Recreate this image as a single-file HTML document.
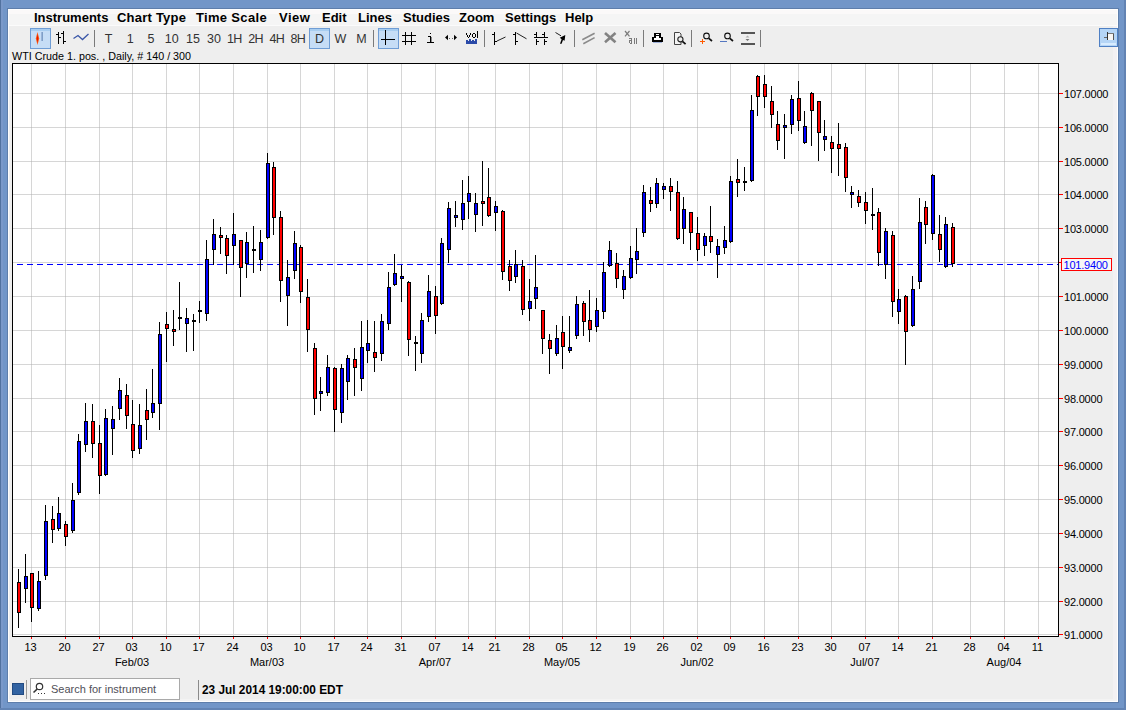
<!DOCTYPE html>
<html><head><meta charset="utf-8"><title>WTI Crude</title>
<style>
html,body{margin:0;padding:0;}
body{width:1126px;height:710px;overflow:hidden;position:relative;background:#7296c8;font-family:"Liberation Sans",sans-serif;}
.a{position:absolute;}
#lf{position:absolute;left:0;top:0;width:1px;height:710px;background:#52729f;}
#lf2{position:absolute;left:1px;top:0;width:2px;height:710px;background:#7b99c9;}
#rf{position:absolute;left:1124px;top:0;width:2px;height:710px;background:#6283b3;}
#bf{position:absolute;left:0;top:708px;width:1126px;height:2px;background:#6384b4;}
#dk{position:absolute;left:7px;top:8px;width:1112px;height:695px;background:#5e7eab;}
#panel{position:absolute;left:8px;top:9px;width:1110px;height:693px;background:#eeeeee;}
#menubar{position:absolute;left:8px;top:9px;width:1110px;height:17px;background:#f5f5f5;}
#mtop{position:absolute;left:8px;top:9px;width:1110px;height:1px;background:#ffffff;}
#mtop2{position:absolute;left:8px;top:10px;width:1110px;height:4px;background:#fbf9f9;}
#mline{position:absolute;left:8px;top:25px;width:1110px;height:1px;background:#fbfbfb;}
#lw{position:absolute;left:8px;top:9px;width:1px;height:693px;background:#fdfdfd;}
#rstrip{position:absolute;left:1113px;top:26px;width:5px;height:676px;background:#f3f1f3;}
#rw{position:absolute;left:1117px;top:9px;width:1px;height:693px;background:#fefefe;}
#bstrip{position:absolute;left:8px;top:699px;width:1110px;height:3px;background:#f3f3f3;}
#bw{position:absolute;left:8px;top:701px;width:1110px;height:1px;background:#fefefe;}
.menu{position:absolute;top:10px;font-weight:bold;font-size:13px;color:#000;line-height:16px;white-space:nowrap;}
.sep{position:absolute;top:30px;width:1px;height:17px;background:#7a7a7a;}
svg{position:absolute;left:0;top:0;}
.ax{font-size:11px;fill:#000;}
.tf{font-size:12.5px;fill:#333;}
</style></head><body>
<div id="lf"></div><div id="lf2"></div><div id="rf"></div><div id="bf"></div>
<div id="dk"></div>
<div id="panel"></div>
<div id="menubar"></div>
<div id="mtop2"></div>
<div id="mtop"></div>
<div id="mline"></div>
<div id="rstrip"></div>
<div id="bstrip"></div>
<div id="lw"></div><div id="rw"></div><div id="bw"></div>
<div class="menu" style="left:34px;letter-spacing:0px">Instruments</div>
<div class="menu" style="left:117px;letter-spacing:0.22px">Chart Type</div>
<div class="menu" style="left:196px;letter-spacing:0.33px">Time Scale</div>
<div class="menu" style="left:279px;letter-spacing:0.5px">View</div>
<div class="menu" style="left:322px;letter-spacing:0px">Edit</div>
<div class="menu" style="left:358px;letter-spacing:0px">Lines</div>
<div class="menu" style="left:403px;letter-spacing:0px">Studies</div>
<div class="menu" style="left:459px;letter-spacing:0px">Zoom</div>
<div class="menu" style="left:505px;letter-spacing:0px">Settings</div>
<div class="menu" style="left:565px;letter-spacing:0px">Help</div>
<div class="sep" style="left:94px"></div>
<div class="sep" style="left:373px"></div>
<div class="sep" style="left:484px"></div>
<div class="sep" style="left:574px"></div>
<div class="sep" style="left:643px"></div>
<div class="sep" style="left:691px"></div>
<div class="sep" style="left:760px"></div>
<div class="a" style="left:12px;top:50px;font-size:10.75px;line-height:13px;color:#000;white-space:nowrap">WTI Crude 1. pos. , Daily, # 140 / 300</div>
<svg width="1126" height="710" viewBox="0 0 1126 710" shape-rendering="crispEdges">
<rect x="30" y="28" width="21" height="21" fill="#6f9dd5"/>
<rect x="31" y="29" width="19" height="19" fill="#c6ddf6"/>
<rect x="31" y="29" width="19" height="2" fill="#a8cdf0"/>
<rect x="309" y="28" width="21" height="21" fill="#6f9dd5"/>
<rect x="310" y="29" width="19" height="19" fill="#c6ddf6"/>
<rect x="310" y="29" width="19" height="2" fill="#a8cdf0"/>
<rect x="378" y="28" width="21" height="21" fill="#6f9dd5"/>
<rect x="379" y="29" width="19" height="19" fill="#c6ddf6"/>
<rect x="379" y="29" width="19" height="2" fill="#a8cdf0"/>
<rect x="1099" y="28" width="19" height="19" fill="#4f80c4"/>
<rect x="1100" y="29" width="17" height="17" fill="#b5d5f6"/>
<rect x="1107" y="32" width="1" height="8" fill="#333"/>
<rect x="1104" y="37" width="3" height="1" fill="#666"/>
<rect x="1108" y="34" width="5" height="6" fill="#f8f6f4"/>
<rect x="1113" y="34" width="1" height="6" fill="#555"/>
<rect x="1108" y="33" width="6" height="1" fill="#777"/>
<rect x="1101" y="43" width="15" height="2" fill="#d8ecff"/>
<path d="M37.5 32 L39.2 38.5 L37.5 45 L35.8 38.5 Z" fill="#ff5a10" shape-rendering="geometricPrecision"/>
<path d="M37.5 34 L38.2 38.5 L37.5 43 L36.8 38.5 Z" fill="#e01800" shape-rendering="geometricPrecision"/>
<rect x="41" y="32" width="2" height="9" fill="#7f9fc8"/>
<rect x="41" y="32" width="1" height="9" fill="#9ab4d8"/>
<rect x="58" y="32" width="1" height="12" fill="#000"/>
<rect x="56" y="34" width="2" height="1" fill="#000"/>
<rect x="59" y="37" width="2" height="1" fill="#000"/>
<rect x="63" y="31" width="1" height="13" fill="#000"/>
<rect x="61" y="33" width="2" height="1" fill="#000"/>
<rect x="64" y="41" width="2" height="1" fill="#000"/>
<polyline points="73.5,38.5 78,35.5 82.5,39.5 88.5,34" fill="none" stroke="#3a56a8" stroke-width="1.3" shape-rendering="geometricPrecision"/>
<rect x="385" y="30" width="1" height="15" fill="#000"/>
<rect x="381" y="39" width="14" height="1" fill="#000"/>
<rect x="405" y="32" width="1" height="13" fill="#000"/>
<rect x="411" y="32" width="1" height="13" fill="#000"/>
<rect x="402" y="35" width="14" height="1" fill="#000"/>
<rect x="402" y="41" width="14" height="1" fill="#000"/>
<rect x="430" y="33" width="1" height="1" fill="#000"/>
<rect x="428" y="36" width="2" height="1" fill="#000"/>
<rect x="430" y="36" width="1" height="6" fill="#000"/>
<rect x="427" y="42" width="7" height="1" fill="#000"/>
<rect x="431" y="37" width="1" height="5" fill="#888"/>
<path d="M445 37.5 L448 34.8 L448 40.2 Z" fill="#000" shape-rendering="geometricPrecision"/>
<path d="M457 37.5 L454 34.8 L454 40.2 Z" fill="#000" shape-rendering="geometricPrecision"/>
<rect x="449" y="38" width="1" height="1" fill="#666"/>
<rect x="452" y="38" width="1" height="1" fill="#666"/>
<rect x="466" y="33" width="1" height="2" fill="#000"/>
<rect x="467" y="35" width="1" height="2" fill="#000"/>
<rect x="468" y="37" width="1" height="1" fill="#000"/>
<rect x="469" y="35" width="1" height="2" fill="#000"/>
<rect x="470" y="33" width="1" height="2" fill="#000"/>
<rect x="472" y="34" width="1" height="3" fill="#000"/>
<rect x="473" y="33" width="2" height="1" fill="#000"/>
<rect x="473" y="37" width="2" height="1" fill="#000"/>
<rect x="475" y="34" width="1" height="3" fill="#000"/>
<rect x="477" y="31" width="1" height="7" fill="#000"/>
<path d="M466 44 V40 H468 V41 H469 V39 H471 V41 H472 V40 H474 V41 H475 V39 H477 V44 Z" fill="#2a4aa8"/>
<rect x="494" y="32" width="1" height="13" fill="#000"/>
<rect x="492" y="34" width="2" height="1" fill="#000"/>
<rect x="495" y="41" width="2" height="1" fill="#000"/>
<line x1="497" y1="41" x2="505.5" y2="37" stroke="#222" stroke-width="1" shape-rendering="geometricPrecision"/>
<rect x="515" y="32" width="1" height="13" fill="#000"/>
<rect x="513" y="34" width="2" height="1" fill="#000"/>
<rect x="516" y="41" width="2" height="1" fill="#000"/>
<line x1="516.5" y1="33" x2="526.5" y2="38.8" stroke="#222" stroke-width="1" shape-rendering="geometricPrecision"/>
<rect x="536" y="32" width="1" height="6" fill="#000"/>
<rect x="544" y="32" width="1" height="6" fill="#000"/>
<rect x="534" y="37" width="14" height="1" fill="#000"/>
<rect x="534" y="34" width="2" height="1" fill="#000"/>
<rect x="542" y="34" width="2" height="1" fill="#000"/>
<rect x="536" y="39" width="1" height="6" fill="#000"/>
<rect x="544" y="39" width="1" height="6" fill="#000"/>
<rect x="537" y="41" width="2" height="1" fill="#000"/>
<rect x="545" y="41" width="2" height="1" fill="#000"/>
<line x1="555.5" y1="32.5" x2="561" y2="35.8" stroke="#222" stroke-width="1" shape-rendering="geometricPrecision"/>
<path d="M565.3 35 L559.8 37.8 L561.6 39.2 L560 43.8 L561.6 43.8 L563 40 L564.6 40.8 Z" fill="#000" shape-rendering="geometricPrecision"/>
<g stroke="#8a8a8a" stroke-width="1.6" shape-rendering="geometricPrecision"><line x1="582.3" y1="39.7" x2="594.6" y2="33.3"/><line x1="583.3" y1="43.7" x2="594.6" y2="37.6"/></g>
<g stroke="#828282" stroke-width="2.6" shape-rendering="geometricPrecision"><line x1="605" y1="33" x2="615.5" y2="42.3"/><line x1="615.5" y1="33" x2="605" y2="42.3"/></g>
<g stroke="#7a7a7a" stroke-width="1.2" shape-rendering="geometricPrecision"><line x1="625" y1="31" x2="629.5" y2="36.3"/><line x1="629.5" y1="31" x2="625" y2="36.3"/></g>
<rect x="629" y="38" width="3" height="1" fill="#7a7a7a"/>
<rect x="631" y="39" width="1" height="5" fill="#7a7a7a"/>
<rect x="629" y="40" width="2" height="1" fill="#7a7a7a"/>
<rect x="629" y="41" width="1" height="2" fill="#7a7a7a"/>
<rect x="630" y="43" width="1" height="1" fill="#7a7a7a"/>
<rect x="634" y="38" width="1" height="6" fill="#7a7a7a"/>
<rect x="636" y="38" width="1" height="6" fill="#7a7a7a"/>
<rect x="654" y="33" width="7" height="6" fill="#000"/>
<rect x="656" y="34" width="3" height="4" fill="#fff"/>
<rect x="656" y="35" width="3" height="1" fill="#000"/>
<rect x="652" y="37" width="2" height="5" fill="#000"/>
<rect x="661" y="37" width="2" height="5" fill="#000"/>
<rect x="652" y="40" width="11" height="2" fill="#000"/>
<rect x="654" y="38" width="7" height="2" fill="#fff"/>
<rect x="653" y="42" width="9" height="1" fill="#9fb0d8"/>
<path d="M674.5 32.5 H679.5 L681 34 V44.5 H674.5 Z" fill="#f4f4f4" stroke="#444" stroke-width="1" shape-rendering="geometricPrecision"/>
<circle cx="680.4" cy="39.3" r="2.6" fill="#ececec" stroke="#222" stroke-width="1.1" shape-rendering="geometricPrecision"/>
<line x1="682.4" y1="41.3" x2="685.6" y2="44.2" stroke="#111" stroke-width="1.8" shape-rendering="geometricPrecision"/>
<circle cx="706.5" cy="35.9" r="2.8" fill="none" stroke="#111" stroke-width="1.1" shape-rendering="geometricPrecision"/>
<line x1="708.8" y1="38.3" x2="712" y2="41" stroke="#111" stroke-width="1.7" shape-rendering="geometricPrecision"/>
<rect x="700" y="41" width="5" height="1" fill="#ff5a00"/>
<rect x="702" y="39" width="1" height="5" fill="#ff5a00"/>
<circle cx="727.5" cy="35.9" r="2.8" fill="none" stroke="#111" stroke-width="1.1" shape-rendering="geometricPrecision"/>
<line x1="729.8" y1="38.3" x2="733" y2="41" stroke="#111" stroke-width="1.7" shape-rendering="geometricPrecision"/>
<rect x="720" y="41" width="7" height="1" fill="#5577c0"/>
<rect x="741" y="32" width="14" height="2" fill="#555"/>
<rect x="741" y="43" width="14" height="2" fill="#555"/>
<path d="M745.5 37.5 L747.5 35.5 L749.5 37.5 Z" fill="#b0b0b0" shape-rendering="geometricPrecision"/>
<path d="M745.5 39 L749.5 39 L747.5 41 Z" fill="#707070" shape-rendering="geometricPrecision"/>
<text x="108.5" y="43" class="tf" text-anchor="middle" style="letter-spacing:0px">T</text>
<text x="130.3" y="43" class="tf" text-anchor="middle" style="letter-spacing:0px">1</text>
<text x="151.1" y="43" class="tf" text-anchor="middle" style="letter-spacing:0px">5</text>
<text x="171.7" y="43" class="tf" text-anchor="middle" style="letter-spacing:0px">10</text>
<text x="193" y="43" class="tf" text-anchor="middle" style="letter-spacing:0px">15</text>
<text x="214" y="43" class="tf" text-anchor="middle" style="letter-spacing:0px">30</text>
<text x="234.4" y="43" class="tf" text-anchor="middle" style="letter-spacing:-0.7px">1H</text>
<text x="255.6" y="43" class="tf" text-anchor="middle" style="letter-spacing:-0.7px">2H</text>
<text x="276.9" y="43" class="tf" text-anchor="middle" style="letter-spacing:-0.7px">4H</text>
<text x="297.8" y="43" class="tf" text-anchor="middle" style="letter-spacing:-0.7px">8H</text>
<text x="319.5" y="43" class="tf" text-anchor="middle" style="letter-spacing:0px">D</text>
<text x="340.5" y="43" class="tf" text-anchor="middle" style="letter-spacing:0px">W</text>
<text x="361.4" y="43" class="tf" text-anchor="middle" style="letter-spacing:0px">M</text>
<rect x="12" y="63" width="1047" height="574" fill="#fff"/>
<rect x="31" y="64" width="1" height="572" fill="#d6d6d6"/>
<rect x="65" y="64" width="1" height="572" fill="#d6d6d6"/>
<rect x="99" y="64" width="1" height="572" fill="#d6d6d6"/>
<rect x="132" y="64" width="1" height="572" fill="#d6d6d6"/>
<rect x="166" y="64" width="1" height="572" fill="#d6d6d6"/>
<rect x="199" y="64" width="1" height="572" fill="#d6d6d6"/>
<rect x="233" y="64" width="1" height="572" fill="#d6d6d6"/>
<rect x="267" y="64" width="1" height="572" fill="#d6d6d6"/>
<rect x="300" y="64" width="1" height="572" fill="#d6d6d6"/>
<rect x="334" y="64" width="1" height="572" fill="#d6d6d6"/>
<rect x="367" y="64" width="1" height="572" fill="#d6d6d6"/>
<rect x="401" y="64" width="1" height="572" fill="#d6d6d6"/>
<rect x="435" y="64" width="1" height="572" fill="#d6d6d6"/>
<rect x="468" y="64" width="1" height="572" fill="#d6d6d6"/>
<rect x="495" y="64" width="1" height="572" fill="#d6d6d6"/>
<rect x="529" y="64" width="1" height="572" fill="#d6d6d6"/>
<rect x="562" y="64" width="1" height="572" fill="#d6d6d6"/>
<rect x="596" y="64" width="1" height="572" fill="#d6d6d6"/>
<rect x="630" y="64" width="1" height="572" fill="#d6d6d6"/>
<rect x="663" y="64" width="1" height="572" fill="#d6d6d6"/>
<rect x="697" y="64" width="1" height="572" fill="#d6d6d6"/>
<rect x="730" y="64" width="1" height="572" fill="#d6d6d6"/>
<rect x="764" y="64" width="1" height="572" fill="#d6d6d6"/>
<rect x="798" y="64" width="1" height="572" fill="#d6d6d6"/>
<rect x="831" y="64" width="1" height="572" fill="#d6d6d6"/>
<rect x="865" y="64" width="1" height="572" fill="#d6d6d6"/>
<rect x="898" y="64" width="1" height="572" fill="#d6d6d6"/>
<rect x="932" y="64" width="1" height="572" fill="#d6d6d6"/>
<rect x="970" y="64" width="1" height="572" fill="#d6d6d6"/>
<rect x="1004" y="64" width="1" height="572" fill="#d6d6d6"/>
<rect x="1038" y="64" width="1" height="572" fill="#d6d6d6"/>
<rect x="13" y="634" width="1045" height="1" fill="#d6d6d6"/>
<rect x="13" y="601" width="1045" height="1" fill="#d6d6d6"/>
<rect x="13" y="567" width="1045" height="1" fill="#d6d6d6"/>
<rect x="13" y="533" width="1045" height="1" fill="#d6d6d6"/>
<rect x="13" y="499" width="1045" height="1" fill="#d6d6d6"/>
<rect x="13" y="465" width="1045" height="1" fill="#d6d6d6"/>
<rect x="13" y="431" width="1045" height="1" fill="#d6d6d6"/>
<rect x="13" y="398" width="1045" height="1" fill="#d6d6d6"/>
<rect x="13" y="364" width="1045" height="1" fill="#d6d6d6"/>
<rect x="13" y="330" width="1045" height="1" fill="#d6d6d6"/>
<rect x="13" y="296" width="1045" height="1" fill="#d6d6d6"/>
<rect x="13" y="262" width="1045" height="1" fill="#d6d6d6"/>
<rect x="13" y="228" width="1045" height="1" fill="#d6d6d6"/>
<rect x="13" y="194" width="1045" height="1" fill="#d6d6d6"/>
<rect x="13" y="161" width="1045" height="1" fill="#d6d6d6"/>
<rect x="13" y="127" width="1045" height="1" fill="#d6d6d6"/>
<rect x="13" y="93" width="1045" height="1" fill="#d6d6d6"/>
<rect x="31" y="601" width="1" height="1" fill="#c2c2c2"/>
<rect x="31" y="567" width="1" height="1" fill="#c2c2c2"/>
<rect x="31" y="533" width="1" height="1" fill="#c2c2c2"/>
<rect x="31" y="499" width="1" height="1" fill="#c2c2c2"/>
<rect x="31" y="465" width="1" height="1" fill="#c2c2c2"/>
<rect x="31" y="431" width="1" height="1" fill="#c2c2c2"/>
<rect x="31" y="398" width="1" height="1" fill="#c2c2c2"/>
<rect x="31" y="364" width="1" height="1" fill="#c2c2c2"/>
<rect x="31" y="330" width="1" height="1" fill="#c2c2c2"/>
<rect x="31" y="296" width="1" height="1" fill="#c2c2c2"/>
<rect x="31" y="262" width="1" height="1" fill="#c2c2c2"/>
<rect x="31" y="228" width="1" height="1" fill="#c2c2c2"/>
<rect x="31" y="194" width="1" height="1" fill="#c2c2c2"/>
<rect x="31" y="161" width="1" height="1" fill="#c2c2c2"/>
<rect x="31" y="127" width="1" height="1" fill="#c2c2c2"/>
<rect x="31" y="93" width="1" height="1" fill="#c2c2c2"/>
<rect x="65" y="601" width="1" height="1" fill="#c2c2c2"/>
<rect x="65" y="567" width="1" height="1" fill="#c2c2c2"/>
<rect x="65" y="533" width="1" height="1" fill="#c2c2c2"/>
<rect x="65" y="499" width="1" height="1" fill="#c2c2c2"/>
<rect x="65" y="465" width="1" height="1" fill="#c2c2c2"/>
<rect x="65" y="431" width="1" height="1" fill="#c2c2c2"/>
<rect x="65" y="398" width="1" height="1" fill="#c2c2c2"/>
<rect x="65" y="364" width="1" height="1" fill="#c2c2c2"/>
<rect x="65" y="330" width="1" height="1" fill="#c2c2c2"/>
<rect x="65" y="296" width="1" height="1" fill="#c2c2c2"/>
<rect x="65" y="262" width="1" height="1" fill="#c2c2c2"/>
<rect x="65" y="228" width="1" height="1" fill="#c2c2c2"/>
<rect x="65" y="194" width="1" height="1" fill="#c2c2c2"/>
<rect x="65" y="161" width="1" height="1" fill="#c2c2c2"/>
<rect x="65" y="127" width="1" height="1" fill="#c2c2c2"/>
<rect x="65" y="93" width="1" height="1" fill="#c2c2c2"/>
<rect x="99" y="601" width="1" height="1" fill="#c2c2c2"/>
<rect x="99" y="567" width="1" height="1" fill="#c2c2c2"/>
<rect x="99" y="533" width="1" height="1" fill="#c2c2c2"/>
<rect x="99" y="499" width="1" height="1" fill="#c2c2c2"/>
<rect x="99" y="465" width="1" height="1" fill="#c2c2c2"/>
<rect x="99" y="431" width="1" height="1" fill="#c2c2c2"/>
<rect x="99" y="398" width="1" height="1" fill="#c2c2c2"/>
<rect x="99" y="364" width="1" height="1" fill="#c2c2c2"/>
<rect x="99" y="330" width="1" height="1" fill="#c2c2c2"/>
<rect x="99" y="296" width="1" height="1" fill="#c2c2c2"/>
<rect x="99" y="262" width="1" height="1" fill="#c2c2c2"/>
<rect x="99" y="228" width="1" height="1" fill="#c2c2c2"/>
<rect x="99" y="194" width="1" height="1" fill="#c2c2c2"/>
<rect x="99" y="161" width="1" height="1" fill="#c2c2c2"/>
<rect x="99" y="127" width="1" height="1" fill="#c2c2c2"/>
<rect x="99" y="93" width="1" height="1" fill="#c2c2c2"/>
<rect x="132" y="601" width="1" height="1" fill="#c2c2c2"/>
<rect x="132" y="567" width="1" height="1" fill="#c2c2c2"/>
<rect x="132" y="533" width="1" height="1" fill="#c2c2c2"/>
<rect x="132" y="499" width="1" height="1" fill="#c2c2c2"/>
<rect x="132" y="465" width="1" height="1" fill="#c2c2c2"/>
<rect x="132" y="431" width="1" height="1" fill="#c2c2c2"/>
<rect x="132" y="398" width="1" height="1" fill="#c2c2c2"/>
<rect x="132" y="364" width="1" height="1" fill="#c2c2c2"/>
<rect x="132" y="330" width="1" height="1" fill="#c2c2c2"/>
<rect x="132" y="296" width="1" height="1" fill="#c2c2c2"/>
<rect x="132" y="262" width="1" height="1" fill="#c2c2c2"/>
<rect x="132" y="228" width="1" height="1" fill="#c2c2c2"/>
<rect x="132" y="194" width="1" height="1" fill="#c2c2c2"/>
<rect x="132" y="161" width="1" height="1" fill="#c2c2c2"/>
<rect x="132" y="127" width="1" height="1" fill="#c2c2c2"/>
<rect x="132" y="93" width="1" height="1" fill="#c2c2c2"/>
<rect x="166" y="601" width="1" height="1" fill="#c2c2c2"/>
<rect x="166" y="567" width="1" height="1" fill="#c2c2c2"/>
<rect x="166" y="533" width="1" height="1" fill="#c2c2c2"/>
<rect x="166" y="499" width="1" height="1" fill="#c2c2c2"/>
<rect x="166" y="465" width="1" height="1" fill="#c2c2c2"/>
<rect x="166" y="431" width="1" height="1" fill="#c2c2c2"/>
<rect x="166" y="398" width="1" height="1" fill="#c2c2c2"/>
<rect x="166" y="364" width="1" height="1" fill="#c2c2c2"/>
<rect x="166" y="330" width="1" height="1" fill="#c2c2c2"/>
<rect x="166" y="296" width="1" height="1" fill="#c2c2c2"/>
<rect x="166" y="262" width="1" height="1" fill="#c2c2c2"/>
<rect x="166" y="228" width="1" height="1" fill="#c2c2c2"/>
<rect x="166" y="194" width="1" height="1" fill="#c2c2c2"/>
<rect x="166" y="161" width="1" height="1" fill="#c2c2c2"/>
<rect x="166" y="127" width="1" height="1" fill="#c2c2c2"/>
<rect x="166" y="93" width="1" height="1" fill="#c2c2c2"/>
<rect x="199" y="601" width="1" height="1" fill="#c2c2c2"/>
<rect x="199" y="567" width="1" height="1" fill="#c2c2c2"/>
<rect x="199" y="533" width="1" height="1" fill="#c2c2c2"/>
<rect x="199" y="499" width="1" height="1" fill="#c2c2c2"/>
<rect x="199" y="465" width="1" height="1" fill="#c2c2c2"/>
<rect x="199" y="431" width="1" height="1" fill="#c2c2c2"/>
<rect x="199" y="398" width="1" height="1" fill="#c2c2c2"/>
<rect x="199" y="364" width="1" height="1" fill="#c2c2c2"/>
<rect x="199" y="330" width="1" height="1" fill="#c2c2c2"/>
<rect x="199" y="296" width="1" height="1" fill="#c2c2c2"/>
<rect x="199" y="262" width="1" height="1" fill="#c2c2c2"/>
<rect x="199" y="228" width="1" height="1" fill="#c2c2c2"/>
<rect x="199" y="194" width="1" height="1" fill="#c2c2c2"/>
<rect x="199" y="161" width="1" height="1" fill="#c2c2c2"/>
<rect x="199" y="127" width="1" height="1" fill="#c2c2c2"/>
<rect x="199" y="93" width="1" height="1" fill="#c2c2c2"/>
<rect x="233" y="601" width="1" height="1" fill="#c2c2c2"/>
<rect x="233" y="567" width="1" height="1" fill="#c2c2c2"/>
<rect x="233" y="533" width="1" height="1" fill="#c2c2c2"/>
<rect x="233" y="499" width="1" height="1" fill="#c2c2c2"/>
<rect x="233" y="465" width="1" height="1" fill="#c2c2c2"/>
<rect x="233" y="431" width="1" height="1" fill="#c2c2c2"/>
<rect x="233" y="398" width="1" height="1" fill="#c2c2c2"/>
<rect x="233" y="364" width="1" height="1" fill="#c2c2c2"/>
<rect x="233" y="330" width="1" height="1" fill="#c2c2c2"/>
<rect x="233" y="296" width="1" height="1" fill="#c2c2c2"/>
<rect x="233" y="262" width="1" height="1" fill="#c2c2c2"/>
<rect x="233" y="228" width="1" height="1" fill="#c2c2c2"/>
<rect x="233" y="194" width="1" height="1" fill="#c2c2c2"/>
<rect x="233" y="161" width="1" height="1" fill="#c2c2c2"/>
<rect x="233" y="127" width="1" height="1" fill="#c2c2c2"/>
<rect x="233" y="93" width="1" height="1" fill="#c2c2c2"/>
<rect x="267" y="601" width="1" height="1" fill="#c2c2c2"/>
<rect x="267" y="567" width="1" height="1" fill="#c2c2c2"/>
<rect x="267" y="533" width="1" height="1" fill="#c2c2c2"/>
<rect x="267" y="499" width="1" height="1" fill="#c2c2c2"/>
<rect x="267" y="465" width="1" height="1" fill="#c2c2c2"/>
<rect x="267" y="431" width="1" height="1" fill="#c2c2c2"/>
<rect x="267" y="398" width="1" height="1" fill="#c2c2c2"/>
<rect x="267" y="364" width="1" height="1" fill="#c2c2c2"/>
<rect x="267" y="330" width="1" height="1" fill="#c2c2c2"/>
<rect x="267" y="296" width="1" height="1" fill="#c2c2c2"/>
<rect x="267" y="262" width="1" height="1" fill="#c2c2c2"/>
<rect x="267" y="228" width="1" height="1" fill="#c2c2c2"/>
<rect x="267" y="194" width="1" height="1" fill="#c2c2c2"/>
<rect x="267" y="161" width="1" height="1" fill="#c2c2c2"/>
<rect x="267" y="127" width="1" height="1" fill="#c2c2c2"/>
<rect x="267" y="93" width="1" height="1" fill="#c2c2c2"/>
<rect x="300" y="601" width="1" height="1" fill="#c2c2c2"/>
<rect x="300" y="567" width="1" height="1" fill="#c2c2c2"/>
<rect x="300" y="533" width="1" height="1" fill="#c2c2c2"/>
<rect x="300" y="499" width="1" height="1" fill="#c2c2c2"/>
<rect x="300" y="465" width="1" height="1" fill="#c2c2c2"/>
<rect x="300" y="431" width="1" height="1" fill="#c2c2c2"/>
<rect x="300" y="398" width="1" height="1" fill="#c2c2c2"/>
<rect x="300" y="364" width="1" height="1" fill="#c2c2c2"/>
<rect x="300" y="330" width="1" height="1" fill="#c2c2c2"/>
<rect x="300" y="296" width="1" height="1" fill="#c2c2c2"/>
<rect x="300" y="262" width="1" height="1" fill="#c2c2c2"/>
<rect x="300" y="228" width="1" height="1" fill="#c2c2c2"/>
<rect x="300" y="194" width="1" height="1" fill="#c2c2c2"/>
<rect x="300" y="161" width="1" height="1" fill="#c2c2c2"/>
<rect x="300" y="127" width="1" height="1" fill="#c2c2c2"/>
<rect x="300" y="93" width="1" height="1" fill="#c2c2c2"/>
<rect x="334" y="601" width="1" height="1" fill="#c2c2c2"/>
<rect x="334" y="567" width="1" height="1" fill="#c2c2c2"/>
<rect x="334" y="533" width="1" height="1" fill="#c2c2c2"/>
<rect x="334" y="499" width="1" height="1" fill="#c2c2c2"/>
<rect x="334" y="465" width="1" height="1" fill="#c2c2c2"/>
<rect x="334" y="431" width="1" height="1" fill="#c2c2c2"/>
<rect x="334" y="398" width="1" height="1" fill="#c2c2c2"/>
<rect x="334" y="364" width="1" height="1" fill="#c2c2c2"/>
<rect x="334" y="330" width="1" height="1" fill="#c2c2c2"/>
<rect x="334" y="296" width="1" height="1" fill="#c2c2c2"/>
<rect x="334" y="262" width="1" height="1" fill="#c2c2c2"/>
<rect x="334" y="228" width="1" height="1" fill="#c2c2c2"/>
<rect x="334" y="194" width="1" height="1" fill="#c2c2c2"/>
<rect x="334" y="161" width="1" height="1" fill="#c2c2c2"/>
<rect x="334" y="127" width="1" height="1" fill="#c2c2c2"/>
<rect x="334" y="93" width="1" height="1" fill="#c2c2c2"/>
<rect x="367" y="601" width="1" height="1" fill="#c2c2c2"/>
<rect x="367" y="567" width="1" height="1" fill="#c2c2c2"/>
<rect x="367" y="533" width="1" height="1" fill="#c2c2c2"/>
<rect x="367" y="499" width="1" height="1" fill="#c2c2c2"/>
<rect x="367" y="465" width="1" height="1" fill="#c2c2c2"/>
<rect x="367" y="431" width="1" height="1" fill="#c2c2c2"/>
<rect x="367" y="398" width="1" height="1" fill="#c2c2c2"/>
<rect x="367" y="364" width="1" height="1" fill="#c2c2c2"/>
<rect x="367" y="330" width="1" height="1" fill="#c2c2c2"/>
<rect x="367" y="296" width="1" height="1" fill="#c2c2c2"/>
<rect x="367" y="262" width="1" height="1" fill="#c2c2c2"/>
<rect x="367" y="228" width="1" height="1" fill="#c2c2c2"/>
<rect x="367" y="194" width="1" height="1" fill="#c2c2c2"/>
<rect x="367" y="161" width="1" height="1" fill="#c2c2c2"/>
<rect x="367" y="127" width="1" height="1" fill="#c2c2c2"/>
<rect x="367" y="93" width="1" height="1" fill="#c2c2c2"/>
<rect x="401" y="601" width="1" height="1" fill="#c2c2c2"/>
<rect x="401" y="567" width="1" height="1" fill="#c2c2c2"/>
<rect x="401" y="533" width="1" height="1" fill="#c2c2c2"/>
<rect x="401" y="499" width="1" height="1" fill="#c2c2c2"/>
<rect x="401" y="465" width="1" height="1" fill="#c2c2c2"/>
<rect x="401" y="431" width="1" height="1" fill="#c2c2c2"/>
<rect x="401" y="398" width="1" height="1" fill="#c2c2c2"/>
<rect x="401" y="364" width="1" height="1" fill="#c2c2c2"/>
<rect x="401" y="330" width="1" height="1" fill="#c2c2c2"/>
<rect x="401" y="296" width="1" height="1" fill="#c2c2c2"/>
<rect x="401" y="262" width="1" height="1" fill="#c2c2c2"/>
<rect x="401" y="228" width="1" height="1" fill="#c2c2c2"/>
<rect x="401" y="194" width="1" height="1" fill="#c2c2c2"/>
<rect x="401" y="161" width="1" height="1" fill="#c2c2c2"/>
<rect x="401" y="127" width="1" height="1" fill="#c2c2c2"/>
<rect x="401" y="93" width="1" height="1" fill="#c2c2c2"/>
<rect x="435" y="601" width="1" height="1" fill="#c2c2c2"/>
<rect x="435" y="567" width="1" height="1" fill="#c2c2c2"/>
<rect x="435" y="533" width="1" height="1" fill="#c2c2c2"/>
<rect x="435" y="499" width="1" height="1" fill="#c2c2c2"/>
<rect x="435" y="465" width="1" height="1" fill="#c2c2c2"/>
<rect x="435" y="431" width="1" height="1" fill="#c2c2c2"/>
<rect x="435" y="398" width="1" height="1" fill="#c2c2c2"/>
<rect x="435" y="364" width="1" height="1" fill="#c2c2c2"/>
<rect x="435" y="330" width="1" height="1" fill="#c2c2c2"/>
<rect x="435" y="296" width="1" height="1" fill="#c2c2c2"/>
<rect x="435" y="262" width="1" height="1" fill="#c2c2c2"/>
<rect x="435" y="228" width="1" height="1" fill="#c2c2c2"/>
<rect x="435" y="194" width="1" height="1" fill="#c2c2c2"/>
<rect x="435" y="161" width="1" height="1" fill="#c2c2c2"/>
<rect x="435" y="127" width="1" height="1" fill="#c2c2c2"/>
<rect x="435" y="93" width="1" height="1" fill="#c2c2c2"/>
<rect x="468" y="601" width="1" height="1" fill="#c2c2c2"/>
<rect x="468" y="567" width="1" height="1" fill="#c2c2c2"/>
<rect x="468" y="533" width="1" height="1" fill="#c2c2c2"/>
<rect x="468" y="499" width="1" height="1" fill="#c2c2c2"/>
<rect x="468" y="465" width="1" height="1" fill="#c2c2c2"/>
<rect x="468" y="431" width="1" height="1" fill="#c2c2c2"/>
<rect x="468" y="398" width="1" height="1" fill="#c2c2c2"/>
<rect x="468" y="364" width="1" height="1" fill="#c2c2c2"/>
<rect x="468" y="330" width="1" height="1" fill="#c2c2c2"/>
<rect x="468" y="296" width="1" height="1" fill="#c2c2c2"/>
<rect x="468" y="262" width="1" height="1" fill="#c2c2c2"/>
<rect x="468" y="228" width="1" height="1" fill="#c2c2c2"/>
<rect x="468" y="194" width="1" height="1" fill="#c2c2c2"/>
<rect x="468" y="161" width="1" height="1" fill="#c2c2c2"/>
<rect x="468" y="127" width="1" height="1" fill="#c2c2c2"/>
<rect x="468" y="93" width="1" height="1" fill="#c2c2c2"/>
<rect x="495" y="601" width="1" height="1" fill="#c2c2c2"/>
<rect x="495" y="567" width="1" height="1" fill="#c2c2c2"/>
<rect x="495" y="533" width="1" height="1" fill="#c2c2c2"/>
<rect x="495" y="499" width="1" height="1" fill="#c2c2c2"/>
<rect x="495" y="465" width="1" height="1" fill="#c2c2c2"/>
<rect x="495" y="431" width="1" height="1" fill="#c2c2c2"/>
<rect x="495" y="398" width="1" height="1" fill="#c2c2c2"/>
<rect x="495" y="364" width="1" height="1" fill="#c2c2c2"/>
<rect x="495" y="330" width="1" height="1" fill="#c2c2c2"/>
<rect x="495" y="296" width="1" height="1" fill="#c2c2c2"/>
<rect x="495" y="262" width="1" height="1" fill="#c2c2c2"/>
<rect x="495" y="228" width="1" height="1" fill="#c2c2c2"/>
<rect x="495" y="194" width="1" height="1" fill="#c2c2c2"/>
<rect x="495" y="161" width="1" height="1" fill="#c2c2c2"/>
<rect x="495" y="127" width="1" height="1" fill="#c2c2c2"/>
<rect x="495" y="93" width="1" height="1" fill="#c2c2c2"/>
<rect x="529" y="601" width="1" height="1" fill="#c2c2c2"/>
<rect x="529" y="567" width="1" height="1" fill="#c2c2c2"/>
<rect x="529" y="533" width="1" height="1" fill="#c2c2c2"/>
<rect x="529" y="499" width="1" height="1" fill="#c2c2c2"/>
<rect x="529" y="465" width="1" height="1" fill="#c2c2c2"/>
<rect x="529" y="431" width="1" height="1" fill="#c2c2c2"/>
<rect x="529" y="398" width="1" height="1" fill="#c2c2c2"/>
<rect x="529" y="364" width="1" height="1" fill="#c2c2c2"/>
<rect x="529" y="330" width="1" height="1" fill="#c2c2c2"/>
<rect x="529" y="296" width="1" height="1" fill="#c2c2c2"/>
<rect x="529" y="262" width="1" height="1" fill="#c2c2c2"/>
<rect x="529" y="228" width="1" height="1" fill="#c2c2c2"/>
<rect x="529" y="194" width="1" height="1" fill="#c2c2c2"/>
<rect x="529" y="161" width="1" height="1" fill="#c2c2c2"/>
<rect x="529" y="127" width="1" height="1" fill="#c2c2c2"/>
<rect x="529" y="93" width="1" height="1" fill="#c2c2c2"/>
<rect x="562" y="601" width="1" height="1" fill="#c2c2c2"/>
<rect x="562" y="567" width="1" height="1" fill="#c2c2c2"/>
<rect x="562" y="533" width="1" height="1" fill="#c2c2c2"/>
<rect x="562" y="499" width="1" height="1" fill="#c2c2c2"/>
<rect x="562" y="465" width="1" height="1" fill="#c2c2c2"/>
<rect x="562" y="431" width="1" height="1" fill="#c2c2c2"/>
<rect x="562" y="398" width="1" height="1" fill="#c2c2c2"/>
<rect x="562" y="364" width="1" height="1" fill="#c2c2c2"/>
<rect x="562" y="330" width="1" height="1" fill="#c2c2c2"/>
<rect x="562" y="296" width="1" height="1" fill="#c2c2c2"/>
<rect x="562" y="262" width="1" height="1" fill="#c2c2c2"/>
<rect x="562" y="228" width="1" height="1" fill="#c2c2c2"/>
<rect x="562" y="194" width="1" height="1" fill="#c2c2c2"/>
<rect x="562" y="161" width="1" height="1" fill="#c2c2c2"/>
<rect x="562" y="127" width="1" height="1" fill="#c2c2c2"/>
<rect x="562" y="93" width="1" height="1" fill="#c2c2c2"/>
<rect x="596" y="601" width="1" height="1" fill="#c2c2c2"/>
<rect x="596" y="567" width="1" height="1" fill="#c2c2c2"/>
<rect x="596" y="533" width="1" height="1" fill="#c2c2c2"/>
<rect x="596" y="499" width="1" height="1" fill="#c2c2c2"/>
<rect x="596" y="465" width="1" height="1" fill="#c2c2c2"/>
<rect x="596" y="431" width="1" height="1" fill="#c2c2c2"/>
<rect x="596" y="398" width="1" height="1" fill="#c2c2c2"/>
<rect x="596" y="364" width="1" height="1" fill="#c2c2c2"/>
<rect x="596" y="330" width="1" height="1" fill="#c2c2c2"/>
<rect x="596" y="296" width="1" height="1" fill="#c2c2c2"/>
<rect x="596" y="262" width="1" height="1" fill="#c2c2c2"/>
<rect x="596" y="228" width="1" height="1" fill="#c2c2c2"/>
<rect x="596" y="194" width="1" height="1" fill="#c2c2c2"/>
<rect x="596" y="161" width="1" height="1" fill="#c2c2c2"/>
<rect x="596" y="127" width="1" height="1" fill="#c2c2c2"/>
<rect x="596" y="93" width="1" height="1" fill="#c2c2c2"/>
<rect x="630" y="601" width="1" height="1" fill="#c2c2c2"/>
<rect x="630" y="567" width="1" height="1" fill="#c2c2c2"/>
<rect x="630" y="533" width="1" height="1" fill="#c2c2c2"/>
<rect x="630" y="499" width="1" height="1" fill="#c2c2c2"/>
<rect x="630" y="465" width="1" height="1" fill="#c2c2c2"/>
<rect x="630" y="431" width="1" height="1" fill="#c2c2c2"/>
<rect x="630" y="398" width="1" height="1" fill="#c2c2c2"/>
<rect x="630" y="364" width="1" height="1" fill="#c2c2c2"/>
<rect x="630" y="330" width="1" height="1" fill="#c2c2c2"/>
<rect x="630" y="296" width="1" height="1" fill="#c2c2c2"/>
<rect x="630" y="262" width="1" height="1" fill="#c2c2c2"/>
<rect x="630" y="228" width="1" height="1" fill="#c2c2c2"/>
<rect x="630" y="194" width="1" height="1" fill="#c2c2c2"/>
<rect x="630" y="161" width="1" height="1" fill="#c2c2c2"/>
<rect x="630" y="127" width="1" height="1" fill="#c2c2c2"/>
<rect x="630" y="93" width="1" height="1" fill="#c2c2c2"/>
<rect x="663" y="601" width="1" height="1" fill="#c2c2c2"/>
<rect x="663" y="567" width="1" height="1" fill="#c2c2c2"/>
<rect x="663" y="533" width="1" height="1" fill="#c2c2c2"/>
<rect x="663" y="499" width="1" height="1" fill="#c2c2c2"/>
<rect x="663" y="465" width="1" height="1" fill="#c2c2c2"/>
<rect x="663" y="431" width="1" height="1" fill="#c2c2c2"/>
<rect x="663" y="398" width="1" height="1" fill="#c2c2c2"/>
<rect x="663" y="364" width="1" height="1" fill="#c2c2c2"/>
<rect x="663" y="330" width="1" height="1" fill="#c2c2c2"/>
<rect x="663" y="296" width="1" height="1" fill="#c2c2c2"/>
<rect x="663" y="262" width="1" height="1" fill="#c2c2c2"/>
<rect x="663" y="228" width="1" height="1" fill="#c2c2c2"/>
<rect x="663" y="194" width="1" height="1" fill="#c2c2c2"/>
<rect x="663" y="161" width="1" height="1" fill="#c2c2c2"/>
<rect x="663" y="127" width="1" height="1" fill="#c2c2c2"/>
<rect x="663" y="93" width="1" height="1" fill="#c2c2c2"/>
<rect x="697" y="601" width="1" height="1" fill="#c2c2c2"/>
<rect x="697" y="567" width="1" height="1" fill="#c2c2c2"/>
<rect x="697" y="533" width="1" height="1" fill="#c2c2c2"/>
<rect x="697" y="499" width="1" height="1" fill="#c2c2c2"/>
<rect x="697" y="465" width="1" height="1" fill="#c2c2c2"/>
<rect x="697" y="431" width="1" height="1" fill="#c2c2c2"/>
<rect x="697" y="398" width="1" height="1" fill="#c2c2c2"/>
<rect x="697" y="364" width="1" height="1" fill="#c2c2c2"/>
<rect x="697" y="330" width="1" height="1" fill="#c2c2c2"/>
<rect x="697" y="296" width="1" height="1" fill="#c2c2c2"/>
<rect x="697" y="262" width="1" height="1" fill="#c2c2c2"/>
<rect x="697" y="228" width="1" height="1" fill="#c2c2c2"/>
<rect x="697" y="194" width="1" height="1" fill="#c2c2c2"/>
<rect x="697" y="161" width="1" height="1" fill="#c2c2c2"/>
<rect x="697" y="127" width="1" height="1" fill="#c2c2c2"/>
<rect x="697" y="93" width="1" height="1" fill="#c2c2c2"/>
<rect x="730" y="601" width="1" height="1" fill="#c2c2c2"/>
<rect x="730" y="567" width="1" height="1" fill="#c2c2c2"/>
<rect x="730" y="533" width="1" height="1" fill="#c2c2c2"/>
<rect x="730" y="499" width="1" height="1" fill="#c2c2c2"/>
<rect x="730" y="465" width="1" height="1" fill="#c2c2c2"/>
<rect x="730" y="431" width="1" height="1" fill="#c2c2c2"/>
<rect x="730" y="398" width="1" height="1" fill="#c2c2c2"/>
<rect x="730" y="364" width="1" height="1" fill="#c2c2c2"/>
<rect x="730" y="330" width="1" height="1" fill="#c2c2c2"/>
<rect x="730" y="296" width="1" height="1" fill="#c2c2c2"/>
<rect x="730" y="262" width="1" height="1" fill="#c2c2c2"/>
<rect x="730" y="228" width="1" height="1" fill="#c2c2c2"/>
<rect x="730" y="194" width="1" height="1" fill="#c2c2c2"/>
<rect x="730" y="161" width="1" height="1" fill="#c2c2c2"/>
<rect x="730" y="127" width="1" height="1" fill="#c2c2c2"/>
<rect x="730" y="93" width="1" height="1" fill="#c2c2c2"/>
<rect x="764" y="601" width="1" height="1" fill="#c2c2c2"/>
<rect x="764" y="567" width="1" height="1" fill="#c2c2c2"/>
<rect x="764" y="533" width="1" height="1" fill="#c2c2c2"/>
<rect x="764" y="499" width="1" height="1" fill="#c2c2c2"/>
<rect x="764" y="465" width="1" height="1" fill="#c2c2c2"/>
<rect x="764" y="431" width="1" height="1" fill="#c2c2c2"/>
<rect x="764" y="398" width="1" height="1" fill="#c2c2c2"/>
<rect x="764" y="364" width="1" height="1" fill="#c2c2c2"/>
<rect x="764" y="330" width="1" height="1" fill="#c2c2c2"/>
<rect x="764" y="296" width="1" height="1" fill="#c2c2c2"/>
<rect x="764" y="262" width="1" height="1" fill="#c2c2c2"/>
<rect x="764" y="228" width="1" height="1" fill="#c2c2c2"/>
<rect x="764" y="194" width="1" height="1" fill="#c2c2c2"/>
<rect x="764" y="161" width="1" height="1" fill="#c2c2c2"/>
<rect x="764" y="127" width="1" height="1" fill="#c2c2c2"/>
<rect x="764" y="93" width="1" height="1" fill="#c2c2c2"/>
<rect x="798" y="601" width="1" height="1" fill="#c2c2c2"/>
<rect x="798" y="567" width="1" height="1" fill="#c2c2c2"/>
<rect x="798" y="533" width="1" height="1" fill="#c2c2c2"/>
<rect x="798" y="499" width="1" height="1" fill="#c2c2c2"/>
<rect x="798" y="465" width="1" height="1" fill="#c2c2c2"/>
<rect x="798" y="431" width="1" height="1" fill="#c2c2c2"/>
<rect x="798" y="398" width="1" height="1" fill="#c2c2c2"/>
<rect x="798" y="364" width="1" height="1" fill="#c2c2c2"/>
<rect x="798" y="330" width="1" height="1" fill="#c2c2c2"/>
<rect x="798" y="296" width="1" height="1" fill="#c2c2c2"/>
<rect x="798" y="262" width="1" height="1" fill="#c2c2c2"/>
<rect x="798" y="228" width="1" height="1" fill="#c2c2c2"/>
<rect x="798" y="194" width="1" height="1" fill="#c2c2c2"/>
<rect x="798" y="161" width="1" height="1" fill="#c2c2c2"/>
<rect x="798" y="127" width="1" height="1" fill="#c2c2c2"/>
<rect x="798" y="93" width="1" height="1" fill="#c2c2c2"/>
<rect x="831" y="601" width="1" height="1" fill="#c2c2c2"/>
<rect x="831" y="567" width="1" height="1" fill="#c2c2c2"/>
<rect x="831" y="533" width="1" height="1" fill="#c2c2c2"/>
<rect x="831" y="499" width="1" height="1" fill="#c2c2c2"/>
<rect x="831" y="465" width="1" height="1" fill="#c2c2c2"/>
<rect x="831" y="431" width="1" height="1" fill="#c2c2c2"/>
<rect x="831" y="398" width="1" height="1" fill="#c2c2c2"/>
<rect x="831" y="364" width="1" height="1" fill="#c2c2c2"/>
<rect x="831" y="330" width="1" height="1" fill="#c2c2c2"/>
<rect x="831" y="296" width="1" height="1" fill="#c2c2c2"/>
<rect x="831" y="262" width="1" height="1" fill="#c2c2c2"/>
<rect x="831" y="228" width="1" height="1" fill="#c2c2c2"/>
<rect x="831" y="194" width="1" height="1" fill="#c2c2c2"/>
<rect x="831" y="161" width="1" height="1" fill="#c2c2c2"/>
<rect x="831" y="127" width="1" height="1" fill="#c2c2c2"/>
<rect x="831" y="93" width="1" height="1" fill="#c2c2c2"/>
<rect x="865" y="601" width="1" height="1" fill="#c2c2c2"/>
<rect x="865" y="567" width="1" height="1" fill="#c2c2c2"/>
<rect x="865" y="533" width="1" height="1" fill="#c2c2c2"/>
<rect x="865" y="499" width="1" height="1" fill="#c2c2c2"/>
<rect x="865" y="465" width="1" height="1" fill="#c2c2c2"/>
<rect x="865" y="431" width="1" height="1" fill="#c2c2c2"/>
<rect x="865" y="398" width="1" height="1" fill="#c2c2c2"/>
<rect x="865" y="364" width="1" height="1" fill="#c2c2c2"/>
<rect x="865" y="330" width="1" height="1" fill="#c2c2c2"/>
<rect x="865" y="296" width="1" height="1" fill="#c2c2c2"/>
<rect x="865" y="262" width="1" height="1" fill="#c2c2c2"/>
<rect x="865" y="228" width="1" height="1" fill="#c2c2c2"/>
<rect x="865" y="194" width="1" height="1" fill="#c2c2c2"/>
<rect x="865" y="161" width="1" height="1" fill="#c2c2c2"/>
<rect x="865" y="127" width="1" height="1" fill="#c2c2c2"/>
<rect x="865" y="93" width="1" height="1" fill="#c2c2c2"/>
<rect x="898" y="601" width="1" height="1" fill="#c2c2c2"/>
<rect x="898" y="567" width="1" height="1" fill="#c2c2c2"/>
<rect x="898" y="533" width="1" height="1" fill="#c2c2c2"/>
<rect x="898" y="499" width="1" height="1" fill="#c2c2c2"/>
<rect x="898" y="465" width="1" height="1" fill="#c2c2c2"/>
<rect x="898" y="431" width="1" height="1" fill="#c2c2c2"/>
<rect x="898" y="398" width="1" height="1" fill="#c2c2c2"/>
<rect x="898" y="364" width="1" height="1" fill="#c2c2c2"/>
<rect x="898" y="330" width="1" height="1" fill="#c2c2c2"/>
<rect x="898" y="296" width="1" height="1" fill="#c2c2c2"/>
<rect x="898" y="262" width="1" height="1" fill="#c2c2c2"/>
<rect x="898" y="228" width="1" height="1" fill="#c2c2c2"/>
<rect x="898" y="194" width="1" height="1" fill="#c2c2c2"/>
<rect x="898" y="161" width="1" height="1" fill="#c2c2c2"/>
<rect x="898" y="127" width="1" height="1" fill="#c2c2c2"/>
<rect x="898" y="93" width="1" height="1" fill="#c2c2c2"/>
<rect x="932" y="601" width="1" height="1" fill="#c2c2c2"/>
<rect x="932" y="567" width="1" height="1" fill="#c2c2c2"/>
<rect x="932" y="533" width="1" height="1" fill="#c2c2c2"/>
<rect x="932" y="499" width="1" height="1" fill="#c2c2c2"/>
<rect x="932" y="465" width="1" height="1" fill="#c2c2c2"/>
<rect x="932" y="431" width="1" height="1" fill="#c2c2c2"/>
<rect x="932" y="398" width="1" height="1" fill="#c2c2c2"/>
<rect x="932" y="364" width="1" height="1" fill="#c2c2c2"/>
<rect x="932" y="330" width="1" height="1" fill="#c2c2c2"/>
<rect x="932" y="296" width="1" height="1" fill="#c2c2c2"/>
<rect x="932" y="262" width="1" height="1" fill="#c2c2c2"/>
<rect x="932" y="228" width="1" height="1" fill="#c2c2c2"/>
<rect x="932" y="194" width="1" height="1" fill="#c2c2c2"/>
<rect x="932" y="161" width="1" height="1" fill="#c2c2c2"/>
<rect x="932" y="127" width="1" height="1" fill="#c2c2c2"/>
<rect x="932" y="93" width="1" height="1" fill="#c2c2c2"/>
<rect x="970" y="601" width="1" height="1" fill="#c2c2c2"/>
<rect x="970" y="567" width="1" height="1" fill="#c2c2c2"/>
<rect x="970" y="533" width="1" height="1" fill="#c2c2c2"/>
<rect x="970" y="499" width="1" height="1" fill="#c2c2c2"/>
<rect x="970" y="465" width="1" height="1" fill="#c2c2c2"/>
<rect x="970" y="431" width="1" height="1" fill="#c2c2c2"/>
<rect x="970" y="398" width="1" height="1" fill="#c2c2c2"/>
<rect x="970" y="364" width="1" height="1" fill="#c2c2c2"/>
<rect x="970" y="330" width="1" height="1" fill="#c2c2c2"/>
<rect x="970" y="296" width="1" height="1" fill="#c2c2c2"/>
<rect x="970" y="262" width="1" height="1" fill="#c2c2c2"/>
<rect x="970" y="228" width="1" height="1" fill="#c2c2c2"/>
<rect x="970" y="194" width="1" height="1" fill="#c2c2c2"/>
<rect x="970" y="161" width="1" height="1" fill="#c2c2c2"/>
<rect x="970" y="127" width="1" height="1" fill="#c2c2c2"/>
<rect x="970" y="93" width="1" height="1" fill="#c2c2c2"/>
<rect x="1004" y="601" width="1" height="1" fill="#c2c2c2"/>
<rect x="1004" y="567" width="1" height="1" fill="#c2c2c2"/>
<rect x="1004" y="533" width="1" height="1" fill="#c2c2c2"/>
<rect x="1004" y="499" width="1" height="1" fill="#c2c2c2"/>
<rect x="1004" y="465" width="1" height="1" fill="#c2c2c2"/>
<rect x="1004" y="431" width="1" height="1" fill="#c2c2c2"/>
<rect x="1004" y="398" width="1" height="1" fill="#c2c2c2"/>
<rect x="1004" y="364" width="1" height="1" fill="#c2c2c2"/>
<rect x="1004" y="330" width="1" height="1" fill="#c2c2c2"/>
<rect x="1004" y="296" width="1" height="1" fill="#c2c2c2"/>
<rect x="1004" y="262" width="1" height="1" fill="#c2c2c2"/>
<rect x="1004" y="228" width="1" height="1" fill="#c2c2c2"/>
<rect x="1004" y="194" width="1" height="1" fill="#c2c2c2"/>
<rect x="1004" y="161" width="1" height="1" fill="#c2c2c2"/>
<rect x="1004" y="127" width="1" height="1" fill="#c2c2c2"/>
<rect x="1004" y="93" width="1" height="1" fill="#c2c2c2"/>
<rect x="1038" y="601" width="1" height="1" fill="#c2c2c2"/>
<rect x="1038" y="567" width="1" height="1" fill="#c2c2c2"/>
<rect x="1038" y="533" width="1" height="1" fill="#c2c2c2"/>
<rect x="1038" y="499" width="1" height="1" fill="#c2c2c2"/>
<rect x="1038" y="465" width="1" height="1" fill="#c2c2c2"/>
<rect x="1038" y="431" width="1" height="1" fill="#c2c2c2"/>
<rect x="1038" y="398" width="1" height="1" fill="#c2c2c2"/>
<rect x="1038" y="364" width="1" height="1" fill="#c2c2c2"/>
<rect x="1038" y="330" width="1" height="1" fill="#c2c2c2"/>
<rect x="1038" y="296" width="1" height="1" fill="#c2c2c2"/>
<rect x="1038" y="262" width="1" height="1" fill="#c2c2c2"/>
<rect x="1038" y="228" width="1" height="1" fill="#c2c2c2"/>
<rect x="1038" y="194" width="1" height="1" fill="#c2c2c2"/>
<rect x="1038" y="161" width="1" height="1" fill="#c2c2c2"/>
<rect x="1038" y="127" width="1" height="1" fill="#c2c2c2"/>
<rect x="1038" y="93" width="1" height="1" fill="#c2c2c2"/>
<line x1="17" y1="264.5" x2="1058" y2="264.5" stroke="#0000ff" stroke-width="1" stroke-dasharray="6 4"/>
<rect x="18" y="569" width="1" height="59" fill="#000"/>
<rect x="17" y="582" width="4" height="31" fill="#000"/>
<rect x="18" y="583" width="2" height="29" fill="#ff0000"/>
<rect x="25" y="554" width="1" height="49" fill="#000"/>
<rect x="24" y="576" width="4" height="13" fill="#000"/>
<rect x="25" y="577" width="2" height="11" fill="#0000ff"/>
<rect x="31" y="573" width="1" height="49" fill="#000"/>
<rect x="30" y="573" width="4" height="35" fill="#000"/>
<rect x="31" y="574" width="2" height="33" fill="#ff0000"/>
<rect x="38" y="571" width="1" height="40" fill="#000"/>
<rect x="37" y="581" width="4" height="28" fill="#000"/>
<rect x="38" y="582" width="2" height="26" fill="#0000ff"/>
<rect x="45" y="505" width="1" height="75" fill="#000"/>
<rect x="44" y="521" width="4" height="55" fill="#000"/>
<rect x="45" y="522" width="2" height="53" fill="#0000ff"/>
<rect x="52" y="506" width="1" height="37" fill="#000"/>
<rect x="51" y="519" width="4" height="11" fill="#000"/>
<rect x="52" y="520" width="2" height="9" fill="#ff0000"/>
<rect x="58" y="497" width="1" height="34" fill="#000"/>
<rect x="57" y="513" width="4" height="16" fill="#000"/>
<rect x="58" y="514" width="2" height="14" fill="#0000ff"/>
<rect x="65" y="521" width="1" height="25" fill="#000"/>
<rect x="64" y="524" width="4" height="13" fill="#000"/>
<rect x="65" y="525" width="2" height="11" fill="#ff0000"/>
<rect x="72" y="483" width="1" height="50" fill="#000"/>
<rect x="71" y="500" width="4" height="31" fill="#000"/>
<rect x="72" y="501" width="2" height="29" fill="#0000ff"/>
<rect x="78" y="434" width="1" height="61" fill="#000"/>
<rect x="77" y="441" width="4" height="52" fill="#000"/>
<rect x="78" y="442" width="2" height="50" fill="#0000ff"/>
<rect x="85" y="403" width="1" height="49" fill="#000"/>
<rect x="84" y="421" width="4" height="24" fill="#000"/>
<rect x="85" y="422" width="2" height="22" fill="#0000ff"/>
<rect x="92" y="404" width="1" height="54" fill="#000"/>
<rect x="91" y="421" width="4" height="23" fill="#000"/>
<rect x="92" y="422" width="2" height="21" fill="#ff0000"/>
<rect x="99" y="425" width="1" height="69" fill="#000"/>
<rect x="98" y="443" width="4" height="33" fill="#000"/>
<rect x="99" y="444" width="2" height="31" fill="#ff0000"/>
<rect x="105" y="409" width="1" height="67" fill="#000"/>
<rect x="104" y="418" width="4" height="57" fill="#000"/>
<rect x="105" y="419" width="2" height="55" fill="#0000ff"/>
<rect x="112" y="406" width="1" height="49" fill="#000"/>
<rect x="111" y="419" width="4" height="10" fill="#000"/>
<rect x="112" y="420" width="2" height="8" fill="#0000ff"/>
<rect x="119" y="378" width="1" height="42" fill="#000"/>
<rect x="118" y="390" width="4" height="19" fill="#000"/>
<rect x="119" y="391" width="2" height="17" fill="#0000ff"/>
<rect x="126" y="384" width="1" height="45" fill="#000"/>
<rect x="125" y="395" width="4" height="21" fill="#000"/>
<rect x="126" y="396" width="2" height="19" fill="#ff0000"/>
<rect x="132" y="400" width="1" height="58" fill="#000"/>
<rect x="131" y="424" width="4" height="27" fill="#000"/>
<rect x="132" y="425" width="2" height="25" fill="#ff0000"/>
<rect x="139" y="404" width="1" height="50" fill="#000"/>
<rect x="138" y="425" width="4" height="24" fill="#000"/>
<rect x="139" y="426" width="2" height="22" fill="#0000ff"/>
<rect x="146" y="389" width="1" height="51" fill="#000"/>
<rect x="145" y="410" width="4" height="10" fill="#000"/>
<rect x="146" y="411" width="2" height="8" fill="#ff0000"/>
<rect x="152" y="369" width="1" height="49" fill="#000"/>
<rect x="151" y="403" width="4" height="10" fill="#000"/>
<rect x="152" y="404" width="2" height="8" fill="#0000ff"/>
<rect x="159" y="322" width="1" height="108" fill="#000"/>
<rect x="158" y="334" width="4" height="70" fill="#000"/>
<rect x="159" y="335" width="2" height="68" fill="#0000ff"/>
<rect x="166" y="312" width="1" height="50" fill="#000"/>
<rect x="165" y="324" width="4" height="5" fill="#000"/>
<rect x="166" y="325" width="2" height="3" fill="#ff0000"/>
<rect x="173" y="310" width="1" height="36" fill="#000"/>
<rect x="172" y="329" width="4" height="3" fill="#000"/>
<rect x="173" y="330" width="2" height="1" fill="#ff0000"/>
<rect x="179" y="282" width="1" height="48" fill="#000"/>
<rect x="178" y="317" width="4" height="2" fill="#000"/>
<rect x="186" y="308" width="1" height="44" fill="#000"/>
<rect x="185" y="318" width="4" height="6" fill="#000"/>
<rect x="186" y="319" width="2" height="4" fill="#0000ff"/>
<rect x="193" y="314" width="1" height="37" fill="#000"/>
<rect x="192" y="320" width="4" height="2" fill="#000"/>
<rect x="199" y="301" width="1" height="22" fill="#000"/>
<rect x="198" y="310" width="4" height="2" fill="#000"/>
<rect x="206" y="240" width="1" height="81" fill="#000"/>
<rect x="205" y="259" width="4" height="55" fill="#000"/>
<rect x="206" y="260" width="2" height="53" fill="#0000ff"/>
<rect x="213" y="219" width="1" height="46" fill="#000"/>
<rect x="212" y="234" width="4" height="16" fill="#000"/>
<rect x="213" y="235" width="2" height="14" fill="#0000ff"/>
<rect x="220" y="227" width="1" height="27" fill="#000"/>
<rect x="219" y="235" width="4" height="3" fill="#000"/>
<rect x="220" y="236" width="2" height="1" fill="#ff0000"/>
<rect x="226" y="235" width="1" height="39" fill="#000"/>
<rect x="225" y="238" width="4" height="18" fill="#000"/>
<rect x="226" y="239" width="2" height="16" fill="#ff0000"/>
<rect x="233" y="213" width="1" height="52" fill="#000"/>
<rect x="232" y="234" width="4" height="12" fill="#000"/>
<rect x="233" y="235" width="2" height="10" fill="#0000ff"/>
<rect x="240" y="240" width="1" height="57" fill="#000"/>
<rect x="239" y="240" width="4" height="28" fill="#000"/>
<rect x="240" y="241" width="2" height="26" fill="#ff0000"/>
<rect x="246" y="232" width="1" height="46" fill="#000"/>
<rect x="245" y="242" width="4" height="22" fill="#000"/>
<rect x="246" y="243" width="2" height="20" fill="#0000ff"/>
<rect x="253" y="226" width="1" height="47" fill="#000"/>
<rect x="252" y="249" width="4" height="2" fill="#000"/>
<rect x="260" y="230" width="1" height="41" fill="#000"/>
<rect x="259" y="242" width="4" height="18" fill="#000"/>
<rect x="260" y="243" width="2" height="16" fill="#0000ff"/>
<rect x="267" y="153" width="1" height="86" fill="#000"/>
<rect x="266" y="163" width="4" height="75" fill="#000"/>
<rect x="267" y="164" width="2" height="73" fill="#0000ff"/>
<rect x="273" y="162" width="1" height="73" fill="#000"/>
<rect x="272" y="167" width="4" height="51" fill="#000"/>
<rect x="273" y="168" width="2" height="49" fill="#ff0000"/>
<rect x="280" y="211" width="1" height="91" fill="#000"/>
<rect x="279" y="217" width="4" height="64" fill="#000"/>
<rect x="280" y="218" width="2" height="62" fill="#ff0000"/>
<rect x="287" y="260" width="1" height="66" fill="#000"/>
<rect x="286" y="277" width="4" height="19" fill="#000"/>
<rect x="287" y="278" width="2" height="17" fill="#0000ff"/>
<rect x="294" y="231" width="1" height="48" fill="#000"/>
<rect x="293" y="243" width="4" height="28" fill="#000"/>
<rect x="294" y="244" width="2" height="26" fill="#0000ff"/>
<rect x="300" y="245" width="1" height="58" fill="#000"/>
<rect x="299" y="247" width="4" height="45" fill="#000"/>
<rect x="300" y="248" width="2" height="43" fill="#ff0000"/>
<rect x="307" y="279" width="1" height="73" fill="#000"/>
<rect x="306" y="297" width="4" height="33" fill="#000"/>
<rect x="307" y="298" width="2" height="31" fill="#ff0000"/>
<rect x="314" y="343" width="1" height="72" fill="#000"/>
<rect x="313" y="348" width="4" height="51" fill="#000"/>
<rect x="314" y="349" width="2" height="49" fill="#ff0000"/>
<rect x="320" y="377" width="1" height="34" fill="#000"/>
<rect x="319" y="391" width="4" height="3" fill="#000"/>
<rect x="320" y="392" width="2" height="1" fill="#0000ff"/>
<rect x="327" y="355" width="1" height="41" fill="#000"/>
<rect x="326" y="367" width="4" height="26" fill="#000"/>
<rect x="327" y="368" width="2" height="24" fill="#0000ff"/>
<rect x="334" y="367" width="1" height="65" fill="#000"/>
<rect x="333" y="368" width="4" height="42" fill="#000"/>
<rect x="334" y="369" width="2" height="40" fill="#ff0000"/>
<rect x="341" y="364" width="1" height="59" fill="#000"/>
<rect x="340" y="368" width="4" height="45" fill="#000"/>
<rect x="341" y="369" width="2" height="43" fill="#0000ff"/>
<rect x="347" y="355" width="1" height="45" fill="#000"/>
<rect x="346" y="358" width="4" height="24" fill="#000"/>
<rect x="347" y="359" width="2" height="22" fill="#0000ff"/>
<rect x="354" y="348" width="1" height="48" fill="#000"/>
<rect x="353" y="359" width="4" height="9" fill="#000"/>
<rect x="354" y="360" width="2" height="7" fill="#ff0000"/>
<rect x="361" y="321" width="1" height="70" fill="#000"/>
<rect x="360" y="347" width="4" height="32" fill="#000"/>
<rect x="361" y="348" width="2" height="30" fill="#0000ff"/>
<rect x="367" y="320" width="1" height="43" fill="#000"/>
<rect x="366" y="343" width="4" height="8" fill="#000"/>
<rect x="367" y="344" width="2" height="6" fill="#0000ff"/>
<rect x="374" y="321" width="1" height="51" fill="#000"/>
<rect x="373" y="352" width="4" height="6" fill="#000"/>
<rect x="374" y="353" width="2" height="4" fill="#ff0000"/>
<rect x="381" y="314" width="1" height="47" fill="#000"/>
<rect x="380" y="321" width="4" height="33" fill="#000"/>
<rect x="381" y="322" width="2" height="31" fill="#0000ff"/>
<rect x="388" y="272" width="1" height="58" fill="#000"/>
<rect x="387" y="287" width="4" height="37" fill="#000"/>
<rect x="388" y="288" width="2" height="35" fill="#0000ff"/>
<rect x="394" y="254" width="1" height="32" fill="#000"/>
<rect x="393" y="273" width="4" height="12" fill="#000"/>
<rect x="394" y="274" width="2" height="10" fill="#0000ff"/>
<rect x="401" y="265" width="1" height="37" fill="#000"/>
<rect x="400" y="276" width="4" height="3" fill="#000"/>
<rect x="401" y="277" width="2" height="1" fill="#0000ff"/>
<rect x="408" y="281" width="1" height="75" fill="#000"/>
<rect x="407" y="282" width="4" height="58" fill="#000"/>
<rect x="408" y="283" width="2" height="56" fill="#ff0000"/>
<rect x="415" y="336" width="1" height="35" fill="#000"/>
<rect x="414" y="342" width="4" height="2" fill="#000"/>
<rect x="421" y="313" width="1" height="50" fill="#000"/>
<rect x="420" y="320" width="4" height="34" fill="#000"/>
<rect x="421" y="321" width="2" height="32" fill="#0000ff"/>
<rect x="428" y="275" width="1" height="47" fill="#000"/>
<rect x="427" y="291" width="4" height="26" fill="#000"/>
<rect x="428" y="292" width="2" height="24" fill="#0000ff"/>
<rect x="435" y="286" width="1" height="48" fill="#000"/>
<rect x="434" y="296" width="4" height="20" fill="#000"/>
<rect x="435" y="297" width="2" height="18" fill="#ff0000"/>
<rect x="441" y="238" width="1" height="67" fill="#000"/>
<rect x="440" y="243" width="4" height="61" fill="#000"/>
<rect x="441" y="244" width="2" height="59" fill="#0000ff"/>
<rect x="448" y="202" width="1" height="61" fill="#000"/>
<rect x="447" y="208" width="4" height="42" fill="#000"/>
<rect x="448" y="209" width="2" height="40" fill="#0000ff"/>
<rect x="455" y="201" width="1" height="26" fill="#000"/>
<rect x="454" y="215" width="4" height="3" fill="#000"/>
<rect x="455" y="216" width="2" height="1" fill="#0000ff"/>
<rect x="462" y="180" width="1" height="50" fill="#000"/>
<rect x="461" y="203" width="4" height="17" fill="#000"/>
<rect x="462" y="204" width="2" height="15" fill="#0000ff"/>
<rect x="468" y="176" width="1" height="43" fill="#000"/>
<rect x="467" y="193" width="4" height="9" fill="#000"/>
<rect x="468" y="194" width="2" height="7" fill="#0000ff"/>
<rect x="475" y="193" width="1" height="39" fill="#000"/>
<rect x="474" y="203" width="4" height="12" fill="#000"/>
<rect x="475" y="204" width="2" height="10" fill="#0000ff"/>
<rect x="482" y="161" width="1" height="65" fill="#000"/>
<rect x="481" y="201" width="4" height="3" fill="#000"/>
<rect x="482" y="202" width="2" height="1" fill="#ff0000"/>
<rect x="488" y="168" width="1" height="49" fill="#000"/>
<rect x="487" y="197" width="4" height="19" fill="#000"/>
<rect x="488" y="198" width="2" height="17" fill="#ff0000"/>
<rect x="495" y="201" width="1" height="30" fill="#000"/>
<rect x="494" y="206" width="4" height="7" fill="#000"/>
<rect x="495" y="207" width="2" height="5" fill="#0000ff"/>
<rect x="502" y="210" width="1" height="70" fill="#000"/>
<rect x="501" y="211" width="4" height="61" fill="#000"/>
<rect x="502" y="212" width="2" height="59" fill="#ff0000"/>
<rect x="509" y="260" width="1" height="31" fill="#000"/>
<rect x="508" y="266" width="4" height="15" fill="#000"/>
<rect x="509" y="267" width="2" height="13" fill="#ff0000"/>
<rect x="515" y="250" width="1" height="33" fill="#000"/>
<rect x="514" y="264" width="4" height="13" fill="#000"/>
<rect x="515" y="265" width="2" height="11" fill="#0000ff"/>
<rect x="522" y="260" width="1" height="55" fill="#000"/>
<rect x="521" y="266" width="4" height="44" fill="#000"/>
<rect x="522" y="267" width="2" height="42" fill="#ff0000"/>
<rect x="529" y="279" width="1" height="42" fill="#000"/>
<rect x="528" y="301" width="4" height="8" fill="#000"/>
<rect x="529" y="302" width="2" height="6" fill="#0000ff"/>
<rect x="535" y="255" width="1" height="54" fill="#000"/>
<rect x="534" y="287" width="4" height="12" fill="#000"/>
<rect x="535" y="288" width="2" height="10" fill="#0000ff"/>
<rect x="542" y="310" width="1" height="44" fill="#000"/>
<rect x="541" y="310" width="4" height="29" fill="#000"/>
<rect x="542" y="311" width="2" height="27" fill="#ff0000"/>
<rect x="549" y="334" width="1" height="40" fill="#000"/>
<rect x="548" y="340" width="4" height="9" fill="#000"/>
<rect x="549" y="341" width="2" height="7" fill="#ff0000"/>
<rect x="556" y="325" width="1" height="31" fill="#000"/>
<rect x="555" y="338" width="4" height="16" fill="#000"/>
<rect x="556" y="339" width="2" height="14" fill="#0000ff"/>
<rect x="562" y="316" width="1" height="53" fill="#000"/>
<rect x="561" y="332" width="4" height="15" fill="#000"/>
<rect x="562" y="333" width="2" height="13" fill="#ff0000"/>
<rect x="569" y="316" width="1" height="37" fill="#000"/>
<rect x="568" y="347" width="4" height="4" fill="#000"/>
<rect x="569" y="348" width="2" height="2" fill="#0000ff"/>
<rect x="576" y="296" width="1" height="43" fill="#000"/>
<rect x="575" y="304" width="4" height="32" fill="#000"/>
<rect x="576" y="305" width="2" height="30" fill="#0000ff"/>
<rect x="583" y="301" width="1" height="35" fill="#000"/>
<rect x="582" y="303" width="4" height="19" fill="#000"/>
<rect x="583" y="304" width="2" height="17" fill="#ff0000"/>
<rect x="589" y="290" width="1" height="52" fill="#000"/>
<rect x="588" y="320" width="4" height="10" fill="#000"/>
<rect x="589" y="321" width="2" height="8" fill="#ff0000"/>
<rect x="596" y="298" width="1" height="34" fill="#000"/>
<rect x="595" y="310" width="4" height="17" fill="#000"/>
<rect x="596" y="311" width="2" height="15" fill="#0000ff"/>
<rect x="603" y="262" width="1" height="57" fill="#000"/>
<rect x="602" y="272" width="4" height="40" fill="#000"/>
<rect x="603" y="273" width="2" height="38" fill="#0000ff"/>
<rect x="609" y="241" width="1" height="26" fill="#000"/>
<rect x="608" y="250" width="4" height="16" fill="#000"/>
<rect x="609" y="251" width="2" height="14" fill="#0000ff"/>
<rect x="616" y="253" width="1" height="35" fill="#000"/>
<rect x="615" y="263" width="4" height="16" fill="#000"/>
<rect x="616" y="264" width="2" height="14" fill="#ff0000"/>
<rect x="623" y="270" width="1" height="29" fill="#000"/>
<rect x="622" y="276" width="4" height="14" fill="#000"/>
<rect x="623" y="277" width="2" height="12" fill="#0000ff"/>
<rect x="630" y="246" width="1" height="33" fill="#000"/>
<rect x="629" y="258" width="4" height="20" fill="#000"/>
<rect x="630" y="259" width="2" height="18" fill="#0000ff"/>
<rect x="636" y="228" width="1" height="46" fill="#000"/>
<rect x="635" y="251" width="4" height="9" fill="#000"/>
<rect x="636" y="252" width="2" height="7" fill="#0000ff"/>
<rect x="643" y="185" width="1" height="52" fill="#000"/>
<rect x="642" y="192" width="4" height="41" fill="#000"/>
<rect x="643" y="193" width="2" height="39" fill="#0000ff"/>
<rect x="650" y="187" width="1" height="25" fill="#000"/>
<rect x="649" y="200" width="4" height="4" fill="#000"/>
<rect x="650" y="201" width="2" height="2" fill="#ff0000"/>
<rect x="656" y="178" width="1" height="30" fill="#000"/>
<rect x="655" y="183" width="4" height="21" fill="#000"/>
<rect x="656" y="184" width="2" height="19" fill="#0000ff"/>
<rect x="663" y="183" width="1" height="16" fill="#000"/>
<rect x="662" y="186" width="4" height="4" fill="#000"/>
<rect x="663" y="187" width="2" height="2" fill="#0000ff"/>
<rect x="670" y="178" width="1" height="33" fill="#000"/>
<rect x="669" y="186" width="4" height="6" fill="#000"/>
<rect x="670" y="187" width="2" height="4" fill="#ff0000"/>
<rect x="677" y="181" width="1" height="59" fill="#000"/>
<rect x="676" y="192" width="4" height="47" fill="#000"/>
<rect x="677" y="193" width="2" height="45" fill="#ff0000"/>
<rect x="683" y="197" width="1" height="47" fill="#000"/>
<rect x="682" y="209" width="4" height="20" fill="#000"/>
<rect x="683" y="210" width="2" height="18" fill="#0000ff"/>
<rect x="690" y="212" width="1" height="38" fill="#000"/>
<rect x="689" y="212" width="4" height="21" fill="#000"/>
<rect x="690" y="213" width="2" height="19" fill="#ff0000"/>
<rect x="697" y="217" width="1" height="44" fill="#000"/>
<rect x="696" y="233" width="4" height="17" fill="#000"/>
<rect x="697" y="234" width="2" height="15" fill="#ff0000"/>
<rect x="704" y="233" width="1" height="23" fill="#000"/>
<rect x="703" y="236" width="4" height="10" fill="#000"/>
<rect x="704" y="237" width="2" height="8" fill="#0000ff"/>
<rect x="710" y="206" width="1" height="47" fill="#000"/>
<rect x="709" y="236" width="4" height="6" fill="#000"/>
<rect x="710" y="237" width="2" height="4" fill="#ff0000"/>
<rect x="717" y="239" width="1" height="39" fill="#000"/>
<rect x="716" y="246" width="4" height="9" fill="#000"/>
<rect x="717" y="247" width="2" height="7" fill="#0000ff"/>
<rect x="724" y="226" width="1" height="28" fill="#000"/>
<rect x="723" y="240" width="4" height="8" fill="#000"/>
<rect x="724" y="241" width="2" height="6" fill="#0000ff"/>
<rect x="730" y="176" width="1" height="67" fill="#000"/>
<rect x="729" y="181" width="4" height="61" fill="#000"/>
<rect x="730" y="182" width="2" height="59" fill="#0000ff"/>
<rect x="737" y="159" width="1" height="38" fill="#000"/>
<rect x="736" y="179" width="4" height="4" fill="#000"/>
<rect x="737" y="180" width="2" height="2" fill="#ff0000"/>
<rect x="744" y="167" width="1" height="24" fill="#000"/>
<rect x="743" y="181" width="4" height="2" fill="#000"/>
<rect x="751" y="95" width="1" height="87" fill="#000"/>
<rect x="750" y="110" width="4" height="71" fill="#000"/>
<rect x="751" y="111" width="2" height="69" fill="#0000ff"/>
<rect x="757" y="75" width="1" height="41" fill="#000"/>
<rect x="756" y="76" width="4" height="21" fill="#000"/>
<rect x="757" y="77" width="2" height="19" fill="#ff0000"/>
<rect x="764" y="75" width="1" height="33" fill="#000"/>
<rect x="763" y="84" width="4" height="13" fill="#000"/>
<rect x="764" y="85" width="2" height="11" fill="#ff0000"/>
<rect x="771" y="86" width="1" height="42" fill="#000"/>
<rect x="770" y="101" width="4" height="14" fill="#000"/>
<rect x="771" y="102" width="2" height="12" fill="#ff0000"/>
<rect x="777" y="111" width="1" height="39" fill="#000"/>
<rect x="776" y="124" width="4" height="17" fill="#000"/>
<rect x="777" y="125" width="2" height="15" fill="#ff0000"/>
<rect x="784" y="114" width="1" height="45" fill="#000"/>
<rect x="783" y="125" width="4" height="3" fill="#000"/>
<rect x="784" y="126" width="2" height="1" fill="#0000ff"/>
<rect x="791" y="95" width="1" height="39" fill="#000"/>
<rect x="790" y="99" width="4" height="26" fill="#000"/>
<rect x="791" y="100" width="2" height="24" fill="#0000ff"/>
<rect x="798" y="81" width="1" height="50" fill="#000"/>
<rect x="797" y="98" width="4" height="23" fill="#000"/>
<rect x="798" y="99" width="2" height="21" fill="#ff0000"/>
<rect x="804" y="111" width="1" height="33" fill="#000"/>
<rect x="803" y="126" width="4" height="17" fill="#000"/>
<rect x="804" y="127" width="2" height="15" fill="#0000ff"/>
<rect x="811" y="92" width="1" height="54" fill="#000"/>
<rect x="810" y="93" width="4" height="18" fill="#000"/>
<rect x="811" y="94" width="2" height="16" fill="#ff0000"/>
<rect x="818" y="101" width="1" height="60" fill="#000"/>
<rect x="817" y="101" width="4" height="32" fill="#000"/>
<rect x="818" y="102" width="2" height="30" fill="#ff0000"/>
<rect x="824" y="120" width="1" height="31" fill="#000"/>
<rect x="823" y="136" width="4" height="4" fill="#000"/>
<rect x="824" y="137" width="2" height="2" fill="#0000ff"/>
<rect x="831" y="136" width="1" height="37" fill="#000"/>
<rect x="830" y="142" width="4" height="7" fill="#000"/>
<rect x="831" y="143" width="2" height="5" fill="#ff0000"/>
<rect x="838" y="123" width="1" height="53" fill="#000"/>
<rect x="837" y="144" width="4" height="5" fill="#000"/>
<rect x="838" y="145" width="2" height="3" fill="#ff0000"/>
<rect x="845" y="143" width="1" height="49" fill="#000"/>
<rect x="844" y="147" width="4" height="31" fill="#000"/>
<rect x="845" y="148" width="2" height="29" fill="#ff0000"/>
<rect x="851" y="186" width="1" height="22" fill="#000"/>
<rect x="850" y="192" width="4" height="3" fill="#000"/>
<rect x="851" y="193" width="2" height="1" fill="#0000ff"/>
<rect x="858" y="190" width="1" height="17" fill="#000"/>
<rect x="857" y="196" width="4" height="7" fill="#000"/>
<rect x="858" y="197" width="2" height="5" fill="#ff0000"/>
<rect x="865" y="192" width="1" height="32" fill="#000"/>
<rect x="864" y="202" width="4" height="9" fill="#000"/>
<rect x="865" y="203" width="2" height="7" fill="#ff0000"/>
<rect x="872" y="188" width="1" height="42" fill="#000"/>
<rect x="871" y="214" width="4" height="2" fill="#000"/>
<rect x="878" y="208" width="1" height="58" fill="#000"/>
<rect x="877" y="212" width="4" height="41" fill="#000"/>
<rect x="878" y="213" width="2" height="39" fill="#ff0000"/>
<rect x="885" y="228" width="1" height="51" fill="#000"/>
<rect x="884" y="231" width="4" height="34" fill="#000"/>
<rect x="885" y="232" width="2" height="32" fill="#0000ff"/>
<rect x="892" y="231" width="1" height="86" fill="#000"/>
<rect x="891" y="235" width="4" height="67" fill="#000"/>
<rect x="892" y="236" width="2" height="65" fill="#ff0000"/>
<rect x="898" y="289" width="1" height="35" fill="#000"/>
<rect x="897" y="299" width="4" height="13" fill="#000"/>
<rect x="898" y="300" width="2" height="11" fill="#0000ff"/>
<rect x="905" y="295" width="1" height="70" fill="#000"/>
<rect x="904" y="296" width="4" height="36" fill="#000"/>
<rect x="905" y="297" width="2" height="34" fill="#ff0000"/>
<rect x="912" y="276" width="1" height="51" fill="#000"/>
<rect x="911" y="289" width="4" height="37" fill="#000"/>
<rect x="912" y="290" width="2" height="35" fill="#0000ff"/>
<rect x="919" y="198" width="1" height="91" fill="#000"/>
<rect x="918" y="222" width="4" height="60" fill="#000"/>
<rect x="919" y="223" width="2" height="58" fill="#0000ff"/>
<rect x="925" y="201" width="1" height="43" fill="#000"/>
<rect x="924" y="207" width="4" height="18" fill="#000"/>
<rect x="925" y="208" width="2" height="16" fill="#ff0000"/>
<rect x="932" y="174" width="1" height="66" fill="#000"/>
<rect x="931" y="175" width="4" height="59" fill="#000"/>
<rect x="932" y="176" width="2" height="57" fill="#0000ff"/>
<rect x="939" y="215" width="1" height="47" fill="#000"/>
<rect x="938" y="234" width="4" height="16" fill="#000"/>
<rect x="939" y="235" width="2" height="14" fill="#ff0000"/>
<rect x="945" y="217" width="1" height="51" fill="#000"/>
<rect x="944" y="224" width="4" height="43" fill="#000"/>
<rect x="945" y="225" width="2" height="41" fill="#0000ff"/>
<rect x="952" y="223" width="1" height="44" fill="#000"/>
<rect x="951" y="227" width="4" height="37" fill="#000"/>
<rect x="952" y="228" width="2" height="35" fill="#ff0000"/>
<rect x="12" y="63" width="1047" height="1" fill="#000"/>
<rect x="12" y="636" width="1047" height="1" fill="#000"/>
<rect x="12" y="63" width="1" height="574" fill="#000"/>
<rect x="1058" y="63" width="1" height="574" fill="#000"/>
<rect x="1059" y="634" width="4" height="1" fill="#ff0000"/>
<text x="1064" y="639" class="ax" style="letter-spacing:-0.2px">91.0000</text>
<rect x="1059" y="601" width="4" height="1" fill="#ff0000"/>
<text x="1064" y="606" class="ax" style="letter-spacing:-0.2px">92.0000</text>
<rect x="1059" y="567" width="4" height="1" fill="#ff0000"/>
<text x="1064" y="572" class="ax" style="letter-spacing:-0.2px">93.0000</text>
<rect x="1059" y="533" width="4" height="1" fill="#ff0000"/>
<text x="1064" y="538" class="ax" style="letter-spacing:-0.2px">94.0000</text>
<rect x="1059" y="499" width="4" height="1" fill="#ff0000"/>
<text x="1064" y="504" class="ax" style="letter-spacing:-0.2px">95.0000</text>
<rect x="1059" y="465" width="4" height="1" fill="#ff0000"/>
<text x="1064" y="470" class="ax" style="letter-spacing:-0.2px">96.0000</text>
<rect x="1059" y="431" width="4" height="1" fill="#ff0000"/>
<text x="1064" y="436" class="ax" style="letter-spacing:-0.2px">97.0000</text>
<rect x="1059" y="398" width="4" height="1" fill="#ff0000"/>
<text x="1064" y="403" class="ax" style="letter-spacing:-0.2px">98.0000</text>
<rect x="1059" y="364" width="4" height="1" fill="#ff0000"/>
<text x="1064" y="369" class="ax" style="letter-spacing:-0.2px">99.0000</text>
<rect x="1059" y="330" width="4" height="1" fill="#ff0000"/>
<text x="1064" y="335" class="ax" style="letter-spacing:-0.2px">100.0000</text>
<rect x="1059" y="296" width="4" height="1" fill="#ff0000"/>
<text x="1064" y="301" class="ax" style="letter-spacing:-0.2px">101.0000</text>
<rect x="1059" y="262" width="4" height="1" fill="#ff0000"/>
<text x="1064" y="267" class="ax" style="letter-spacing:-0.2px">102.0000</text>
<rect x="1059" y="228" width="4" height="1" fill="#ff0000"/>
<text x="1064" y="233" class="ax" style="letter-spacing:-0.2px">103.0000</text>
<rect x="1059" y="194" width="4" height="1" fill="#ff0000"/>
<text x="1064" y="199" class="ax" style="letter-spacing:-0.2px">104.0000</text>
<rect x="1059" y="161" width="4" height="1" fill="#ff0000"/>
<text x="1064" y="166" class="ax" style="letter-spacing:-0.2px">105.0000</text>
<rect x="1059" y="127" width="4" height="1" fill="#ff0000"/>
<text x="1064" y="132" class="ax" style="letter-spacing:-0.2px">106.0000</text>
<rect x="1059" y="93" width="4" height="1" fill="#ff0000"/>
<text x="1064" y="98" class="ax" style="letter-spacing:-0.2px">107.0000</text>
<rect x="1061.5" y="258.5" width="50" height="12" fill="#f6f6f6" stroke="#ff0000" stroke-width="1"/>
<text x="1063.5" y="268.5" class="ax" style="fill:#0000ff;letter-spacing:-0.2px">101.9400</text>
<rect x="31" y="637" width="1" height="2" fill="#ff0000"/>
<text x="30.5" y="651" class="ax" text-anchor="middle">13</text>
<rect x="65" y="637" width="1" height="2" fill="#ff0000"/>
<text x="64.5" y="651" class="ax" text-anchor="middle">20</text>
<rect x="99" y="637" width="1" height="2" fill="#ff0000"/>
<text x="98.5" y="651" class="ax" text-anchor="middle">27</text>
<rect x="132" y="637" width="1" height="2" fill="#ff0000"/>
<text x="131.5" y="651" class="ax" text-anchor="middle">03</text>
<rect x="166" y="637" width="1" height="2" fill="#ff0000"/>
<text x="165.5" y="651" class="ax" text-anchor="middle">10</text>
<rect x="199" y="637" width="1" height="2" fill="#ff0000"/>
<text x="198.5" y="651" class="ax" text-anchor="middle">17</text>
<rect x="233" y="637" width="1" height="2" fill="#ff0000"/>
<text x="232.5" y="651" class="ax" text-anchor="middle">24</text>
<rect x="267" y="637" width="1" height="2" fill="#ff0000"/>
<text x="266.5" y="651" class="ax" text-anchor="middle">03</text>
<rect x="300" y="637" width="1" height="2" fill="#ff0000"/>
<text x="299.5" y="651" class="ax" text-anchor="middle">10</text>
<rect x="334" y="637" width="1" height="2" fill="#ff0000"/>
<text x="333.5" y="651" class="ax" text-anchor="middle">17</text>
<rect x="367" y="637" width="1" height="2" fill="#ff0000"/>
<text x="366.5" y="651" class="ax" text-anchor="middle">24</text>
<rect x="401" y="637" width="1" height="2" fill="#ff0000"/>
<text x="400.5" y="651" class="ax" text-anchor="middle">31</text>
<rect x="435" y="637" width="1" height="2" fill="#ff0000"/>
<text x="434.5" y="651" class="ax" text-anchor="middle">07</text>
<rect x="468" y="637" width="1" height="2" fill="#ff0000"/>
<text x="467.5" y="651" class="ax" text-anchor="middle">14</text>
<rect x="495" y="637" width="1" height="2" fill="#ff0000"/>
<text x="494.5" y="651" class="ax" text-anchor="middle">21</text>
<rect x="529" y="637" width="1" height="2" fill="#ff0000"/>
<text x="528.5" y="651" class="ax" text-anchor="middle">28</text>
<rect x="562" y="637" width="1" height="2" fill="#ff0000"/>
<text x="561.5" y="651" class="ax" text-anchor="middle">05</text>
<rect x="596" y="637" width="1" height="2" fill="#ff0000"/>
<text x="595.5" y="651" class="ax" text-anchor="middle">12</text>
<rect x="630" y="637" width="1" height="2" fill="#ff0000"/>
<text x="629.5" y="651" class="ax" text-anchor="middle">19</text>
<rect x="663" y="637" width="1" height="2" fill="#ff0000"/>
<text x="662.5" y="651" class="ax" text-anchor="middle">26</text>
<rect x="697" y="637" width="1" height="2" fill="#ff0000"/>
<text x="696.5" y="651" class="ax" text-anchor="middle">02</text>
<rect x="730" y="637" width="1" height="2" fill="#ff0000"/>
<text x="729.5" y="651" class="ax" text-anchor="middle">09</text>
<rect x="764" y="637" width="1" height="2" fill="#ff0000"/>
<text x="763.5" y="651" class="ax" text-anchor="middle">16</text>
<rect x="798" y="637" width="1" height="2" fill="#ff0000"/>
<text x="797.5" y="651" class="ax" text-anchor="middle">23</text>
<rect x="831" y="637" width="1" height="2" fill="#ff0000"/>
<text x="830.5" y="651" class="ax" text-anchor="middle">30</text>
<rect x="865" y="637" width="1" height="2" fill="#ff0000"/>
<text x="864.5" y="651" class="ax" text-anchor="middle">07</text>
<rect x="898" y="637" width="1" height="2" fill="#ff0000"/>
<text x="897.5" y="651" class="ax" text-anchor="middle">14</text>
<rect x="932" y="637" width="1" height="2" fill="#ff0000"/>
<text x="931.5" y="651" class="ax" text-anchor="middle">21</text>
<rect x="970" y="637" width="1" height="2" fill="#ff0000"/>
<text x="969.5" y="651" class="ax" text-anchor="middle">28</text>
<rect x="1004" y="637" width="1" height="2" fill="#ff0000"/>
<text x="1003.5" y="651" class="ax" text-anchor="middle">04</text>
<rect x="1038" y="637" width="1" height="2" fill="#ff0000"/>
<text x="1037.5" y="651" class="ax" text-anchor="middle">11</text>
<text x="132" y="666" class="ax" text-anchor="middle">Feb/03</text>
<text x="267" y="666" class="ax" text-anchor="middle">Mar/03</text>
<text x="435" y="666" class="ax" text-anchor="middle">Apr/07</text>
<text x="562" y="666" class="ax" text-anchor="middle">May/05</text>
<text x="697" y="666" class="ax" text-anchor="middle">Jun/02</text>
<text x="865" y="666" class="ax" text-anchor="middle">Jul/07</text>
<text x="1004" y="666" class="ax" text-anchor="middle">Aug/04</text>
</svg>
<div class="a" style="left:12px;top:683px;width:10px;height:10px;background:#3263a2;border:1px solid #224b82"></div>
<div class="a" style="left:26px;top:680px;width:1px;height:19px;background:#9a9a9a"></div>
<div class="a" style="left:30px;top:678px;width:148px;height:20px;background:#fff;border:1px solid #a9a9a9"></div>
<svg width="1126" height="710" style="pointer-events:none">
<circle cx="39.5" cy="686.5" r="3.2" fill="none" stroke="#333" stroke-width="1.2"/>
<line x1="37.2" y1="689" x2="33.5" y2="692.5" stroke="#333" stroke-width="1.6"/>
<rect x="38" y="693" width="1" height="1" fill="#333"/><rect x="41" y="693" width="1" height="1" fill="#333"/><rect x="44" y="693" width="1" height="1" fill="#333"/>
</svg>
<div class="a" style="left:51px;top:682px;font-size:11px;line-height:14px;color:#505058;white-space:nowrap">Search for instrument</div>
<div class="a" style="left:198px;top:680px;width:1px;height:20px;background:#8a8a8a"></div>
<div class="a" style="left:202px;top:683px;font-size:11.85px;line-height:14px;font-weight:bold;color:#000;white-space:nowrap">23 Jul 2014 19:00:00 EDT</div>
</body></html>
